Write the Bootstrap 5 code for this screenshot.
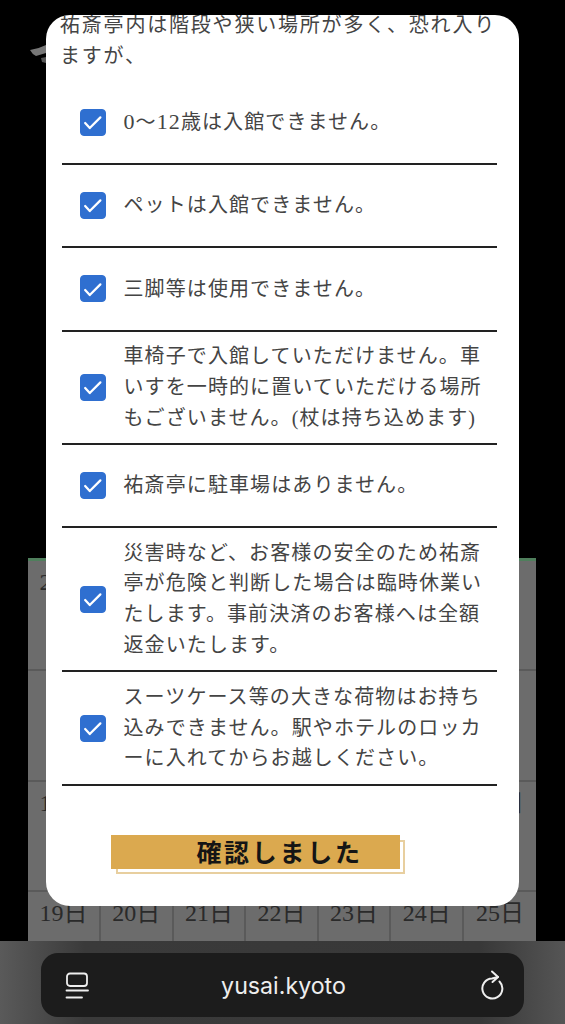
<!DOCTYPE html>
<html lang="ja">
<head>
<meta charset="utf-8">
<meta name="viewport" content="width=device-width, initial-scale=1">
<link rel="stylesheet" href="https://cdn.jsdelivr.net/npm/bootstrap@5.3.0/dist/css/bootstrap.min.css">
<style>
html,body{height:1024px;overflow:hidden;background:#000}
body{font-family:"Liberation Serif","Noto Sans CJK JP",serif;color:#333}
.stage{height:941px;overflow:hidden;padding:558px 29px 0 28px}
.cal{background:#6c6c6c;border-top:3px solid #4f7f5c;display:grid;grid-template-columns:73px repeat(5,72.6px) 1fr;grid-auto-rows:110.3px;color:#2a2a2a;font-size:24px}
.cal-cell{border-right:2px solid #5a5a5a;border-bottom:2px solid #5a5a5a;text-align:center;padding-top:5px;line-height:32px}
.cal-cell:nth-child(7n){border-right:0}
.stray{position:absolute;left:28px;top:44px;width:20px;height:22px}
.sheet{position:absolute;z-index:1;left:46px;top:15px;width:473px;height:891px;background:#fff;border-radius:24px;overflow:hidden;padding:0 22px 0 16px}
.intro{margin:-5px -6px 10px -2px;font-size:20px;line-height:31px;letter-spacing:1.8px;color:#444}
.chk-row{min-height:83.2px;padding:9.5px 0 9.5px 18px;border-bottom:2px solid #222;gap:17.5px;font-size:20px;line-height:30.8px;letter-spacing:1.1px;color:#444}
.chk-row .form-check-input{width:26px;height:27px;margin:0;flex:none;border-radius:4px;background-color:#2f6fd0;border-color:#2f6fd0;opacity:1;background-size:100%;background-image:url("data:image/svg+xml,%3Csvg xmlns='http://www.w3.org/2000/svg' viewBox='0 0 26 27'%3E%3Cpath d='M4.5 14l5 5.5L21 8' fill='none' stroke='%23fff' stroke-width='2.4' stroke-linecap='round' stroke-linejoin='round'/%3E%3C/svg%3E")}
.chk-label{width:363px;flex:none;margin:0}
.latin{font-size:22px}
.confirm-btn{position:relative;display:block;margin:49px 0 0 49px;width:289px;height:34px;padding:0 0 2px 48px;background:#dba94f;border:0;border-radius:0;color:#151515;font-weight:700;font-size:25px;line-height:32px;letter-spacing:2.7px;text-align:center;font-family:"Noto Sans CJK JP",sans-serif}
.confirm-btn:hover{background:#dba94f;color:#151515}
.confirm-btn::after{content:"";position:absolute;left:5px;top:5px;width:100%;height:100%;border:2px solid #e8cf9f;z-index:-1}
.browser{height:83px;background:linear-gradient(90deg,#5a5a5a 0,#3a3a3a 15%,#383838 85%,#555 100%);padding:12px 41px 7px}
.url-box{height:64px;background:#1c1c1c;border-radius:17px;padding:0 19px 0 24px;color:#eee;font-family:Inter,"Liberation Sans",sans-serif;font-size:23.2px}
.url-box span{margin-left:-3px;padding-top:2px}
</style>
</head>
<body>
<div class="stage">
  <div class="cal">
    <div class="cal-cell">28日</div><div class="cal-cell"></div><div class="cal-cell"></div><div class="cal-cell"></div><div class="cal-cell"></div><div class="cal-cell"></div><div class="cal-cell"></div>
    <div class="cal-cell"></div><div class="cal-cell"></div><div class="cal-cell"></div><div class="cal-cell"></div><div class="cal-cell"></div><div class="cal-cell"></div><div class="cal-cell"></div>
    <div class="cal-cell">12日</div><div class="cal-cell"></div><div class="cal-cell"></div><div class="cal-cell"></div><div class="cal-cell"></div><div class="cal-cell"></div><div class="cal-cell">18日</div>
    <div class="cal-cell">19日</div><div class="cal-cell">20日</div><div class="cal-cell">21日</div><div class="cal-cell">22日</div><div class="cal-cell">23日</div><div class="cal-cell">24日</div><div class="cal-cell">25日</div>
  </div>
</div>
<svg class="stray" viewBox="0 0 20 22" aria-hidden="true"><path d="M2 6 Q10 5 18 1 L18 9 L8 12 Q4 10 2 6Z" fill="#777"/><path d="M13 14 L18 13 L18 19 L14 18Z" fill="#555"/></svg>
<section class="sheet">
  <p class="intro">祐斎亭内は階段や狭い場所が多く、恐れ入りますが、</p>
  <div class="chk-row d-flex align-items-center"><input class="form-check-input" type="checkbox" checked aria-label="確認"><p class="chk-label"><span class="latin">0</span>〜<span class="latin">12</span>歳は入館できません。</p></div>
  <div class="chk-row d-flex align-items-center"><input class="form-check-input" type="checkbox" checked aria-label="確認"><p class="chk-label">ペットは入館できません。</p></div>
  <div class="chk-row d-flex align-items-center"><input class="form-check-input" type="checkbox" checked aria-label="確認"><p class="chk-label">三脚等は使用できません。</p></div>
  <div class="chk-row d-flex align-items-center"><input class="form-check-input" type="checkbox" checked aria-label="確認"><p class="chk-label">車椅子で入館していただけません。車いすを一時的に置いていただける場所もございません。(杖は持ち込めます)</p></div>
  <div class="chk-row d-flex align-items-center"><input class="form-check-input" type="checkbox" checked aria-label="確認"><p class="chk-label">祐斎亭に駐車場はありません。</p></div>
  <div class="chk-row d-flex align-items-center"><input class="form-check-input" type="checkbox" checked aria-label="確認"><p class="chk-label">災害時など、お客様の安全のため祐斎亭が危険と判断した場合は臨時休業いたします。事前決済のお客様へは全額返金いたします。</p></div>
  <div class="chk-row d-flex align-items-center"><input class="form-check-input" type="checkbox" checked aria-label="確認"><p class="chk-label">スーツケース等の大きな荷物はお持ち込みできません。駅やホテルのロッカーに入れてからお越しください。</p></div>
  <button type="button" class="btn confirm-btn">確認しました</button>
</section>
<div class="browser">
  <div class="url-box d-flex align-items-center justify-content-between">
    <svg width="24" height="28" viewBox="0 0 24 28" fill="none" stroke="#eee" stroke-width="1.8" stroke-linecap="round" aria-hidden="true"><rect x="2" y="2.5" width="20" height="12.5" rx="3"/><path d="M1.5 19.5H23M1.5 26.5H17"/></svg>
    <span>yusai.kyoto</span>
    <svg width="24" height="30" viewBox="0 0 24 30" fill="none" stroke="#eee" stroke-width="2" stroke-linecap="round" stroke-linejoin="round" aria-hidden="true"><path d="M18.5 11.5A10 10 0 1 1 11 8.5L17 7"/><path d="M11 1.5L17 7L11.5 12"/></svg>
  </div>
</div>
</body>
</html>
